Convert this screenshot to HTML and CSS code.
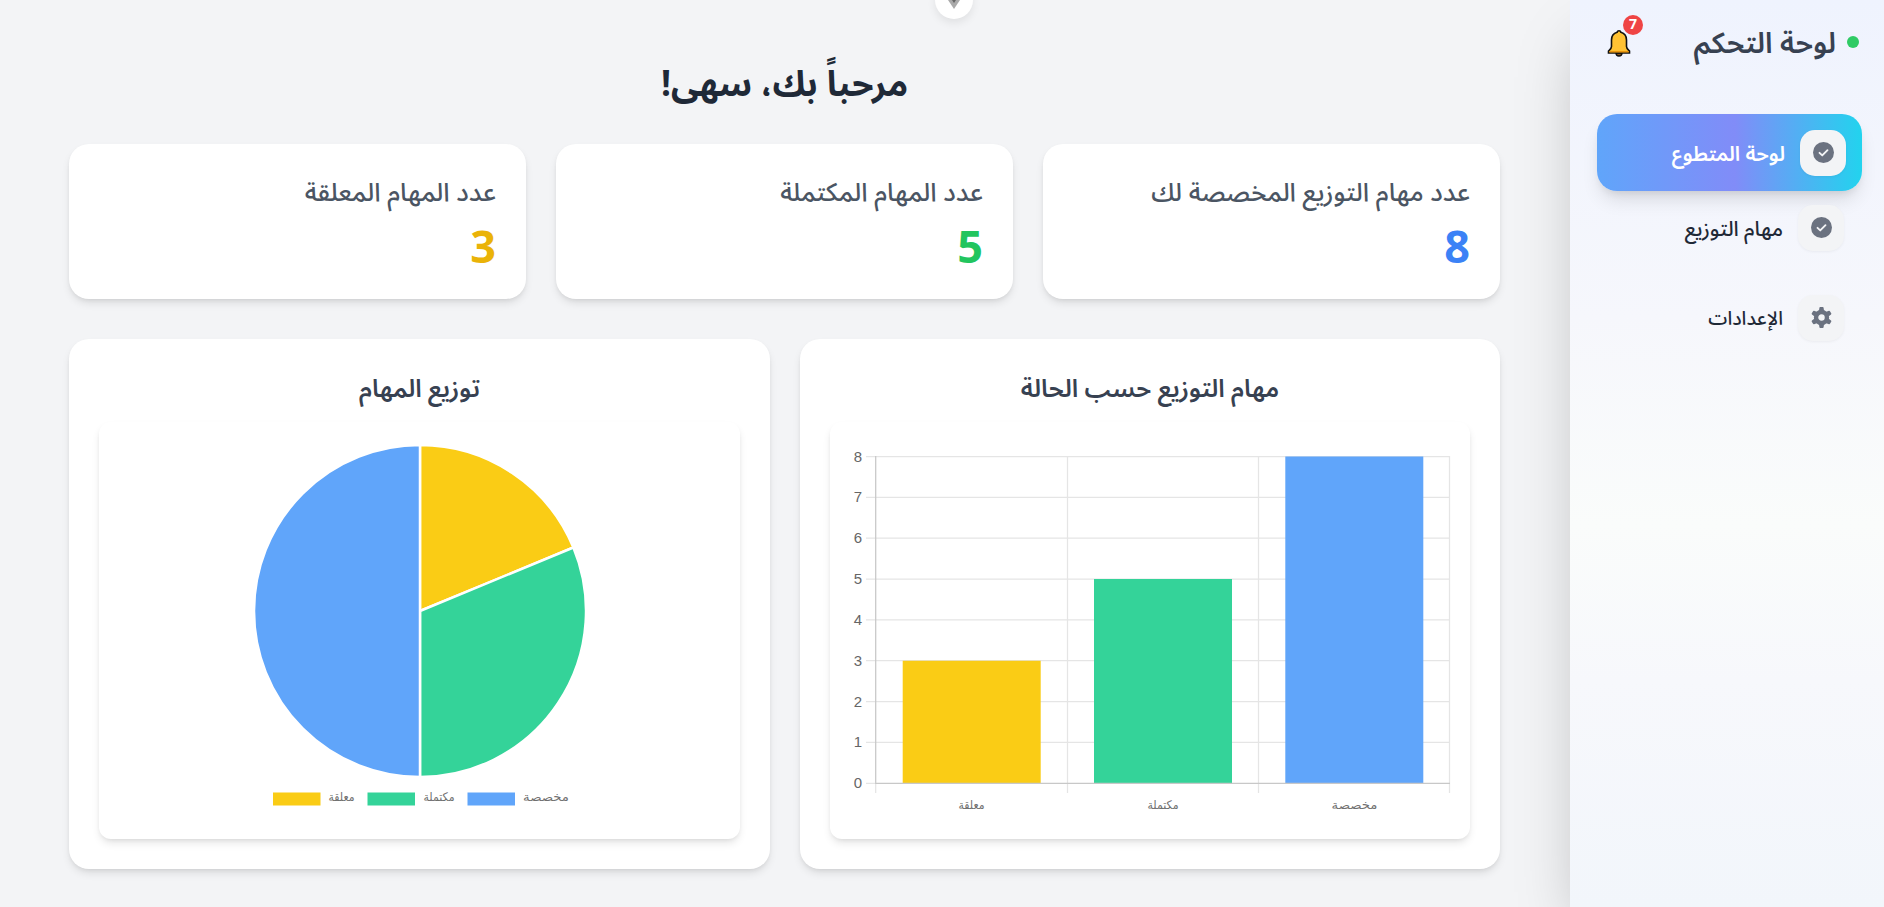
FILE: index.html
```html
<!DOCTYPE html>
<html lang="ar" dir="rtl">
<head>
<meta charset="utf-8">
<title>لوحة التحكم</title>
<link rel="stylesheet" href="styles.css">
</head>
<body>
<aside class="sidebar">
  <header class="brand">
    <span class="status"></span>
    <h2 class="brand-title">لوحة التحكم</h2>
    <div class="bell">
      <svg width="24" height="28" viewBox="0 0 24 28"><path d="M9 24h6a3 3 0 0 1-6 0z" fill="#8a5a1c" stroke="#111" stroke-width="1.4"/><path d="M12 1.800c-1.100 0-1.700.7-1.900 1.500C6.700 4.200 4.500 7 4.500 11v6.500c0 2-1.300 3-3 4.600V24h21v-1.900c-1.700-1.600-3-2.600-3-4.600V11c0-4-2.200-6.800-5.600-7.700-.2-.8-.8-1.500-1.900-1.500z" fill="#ffc233" stroke="#111" stroke-width="1.600"/><path d="M2.300 22.700h19.400" stroke="#e8930c" stroke-width="1.500"/></svg>
      <span class="badge">7</span>
    </div>
  </header>
  <nav class="nav">
    <a class="item active">
      <span class="tile"><svg width="21" height="21" viewBox="0 0 20 20"><circle cx="10" cy="10" r="10" fill="#6b7280"/><path d="M6.200 10.300l2.600 2.500 5-5" fill="none" stroke="#f3f4f6" stroke-width="1.800" stroke-linecap="round" stroke-linejoin="round"/></svg></span>
      <span class="label">لوحة المتطوع</span>
    </a>
    <a class="item">
      <span class="tile"><svg width="21" height="21" viewBox="0 0 20 20"><circle cx="10" cy="10" r="10" fill="#6b7280"/><path d="M6.200 10.300l2.600 2.500 5-5" fill="none" stroke="#f3f4f6" stroke-width="1.800" stroke-linecap="round" stroke-linejoin="round"/></svg></span>
      <span class="label">مهام التوزيع</span>
    </a>
    <a class="item last">
      <span class="tile"><svg width="21" height="21" viewBox="0 0 20 20"><circle cx="10" cy="10" r="5.200" fill="none" stroke="#6b7280" stroke-width="4.200"/><g fill="#6b7280" stroke="#6b7280" stroke-width="1.600" stroke-linejoin="round"><path id="tooth" d="M8.400 3.500L8.800.8h2.400l.4 2.700z"/><use href="#tooth" transform="rotate(60 10 10)"/><use href="#tooth" transform="rotate(120 10 10)"/><use href="#tooth" transform="rotate(180 10 10)"/><use href="#tooth" transform="rotate(240 10 10)"/><use href="#tooth" transform="rotate(300 10 10)"/></g></svg></span>
      <span class="label">الإعدادات</span>
    </a>
  </nav>
</aside>
<main class="main">
  <span class="pull"><svg width="12" height="10" viewBox="0 0 12 10"><path d="M0 0h12L6 9z" fill="#aaa"/><path d="M4 0h4L6 3z" fill="#666"/></svg></span>
  <h1 class="welcome">مرحباً بك، سهى!</h1>
  <section class="stats">
    <div class="card stat"><h3>عدد مهام التوزيع المخصصة لك</h3><p class="blue">8</p></div>
    <div class="card stat"><h3>عدد المهام المكتملة</h3><p class="green">5</p></div>
    <div class="card stat"><h3>عدد المهام المعلقة</h3><p class="amber">3</p></div>
  </section>
  <section class="charts">
    <div class="card chart">
      <h3>مهام التوزيع حسب الحالة</h3>
      <div class="plot">
        <svg width="640" height="417" viewBox="830 422 640 417" direction="ltr">
          <g stroke="#e5e5e5" stroke-width="1.250">
            <path d="M866 456.500H1450M866 497.300H1450M866 538.200H1450M866 579H1450M866 619.900H1450M866 660.700H1450M866 701.600H1450M866 742.400H1450M866 783.300H876"/>
            <path d="M1067.500 456V793M1258.500 456V793M1449.500 456V793M875.700 783V793"/>
          </g>
          <path d="M902.700 660.700h138v122.600h-138z" fill="#facc15"/>
          <path d="M1094 579h138v204.300h-138z" fill="#34d399"/>
          <path d="M1285.300 456.500h138v326.800h-138z" fill="#60a5fa"/>
          <path d="M875.700 456V783.300H1450" fill="none" stroke="#c8c8c8" stroke-width="1.250"/>
          <g class="ticks" text-anchor="end">
            <text x="862" y="461.500">8</text><text x="862" y="502.300">7</text><text x="862" y="543.200">6</text><text x="862" y="584">5</text><text x="862" y="624.900">4</text><text x="862" y="665.700">3</text><text x="862" y="706.600">2</text><text x="862" y="747.400">1</text><text x="862" y="788.300">0</text>
          </g>
          <g class="names" text-anchor="middle" lengthAdjust="spacingAndGlyphs">
            <text x="971.500" y="808.500" textLength="26" lengthAdjust="spacingAndGlyphs">معلقة</text><text x="1163" y="808.500" textLength="31" lengthAdjust="spacingAndGlyphs">مكتملة</text><text x="1354.500" y="808.500" textLength="46" lengthAdjust="spacingAndGlyphs">مخصصة</text>
          </g>
        </svg>
      </div>
    </div>
    <div class="card chart">
      <h3>توزيع المهام</h3>
      <div class="plot">
        <svg width="641" height="417" viewBox="99 422 641 417" direction="ltr">
          <g stroke="#fff" stroke-width="2.500" stroke-linejoin="round">
            <path d="M420 611V445A166 166 0 0 1 573.400 547.500z" fill="#facc15"/>
            <path d="M420 611L573.400 547.500A166 166 0 0 1 420 777z" fill="#34d399"/>
            <path d="M420 611V777A166 166 0 0 1 420 445z" fill="#60a5fa"/>
          </g>
          <path d="M273 792.500h47.500v13H273z" fill="#facc15"/>
          <path d="M367.500 792.500H415v13h-47.500z" fill="#34d399"/>
          <path d="M467.500 792.500H515v13h-47.500z" fill="#60a5fa"/>
          <g class="names" text-anchor="middle">
            <text x="341.500" y="801" textLength="26" lengthAdjust="spacingAndGlyphs">معلقة</text><text x="439" y="801" textLength="31" lengthAdjust="spacingAndGlyphs">مكتملة</text><text x="546" y="801" textLength="46" lengthAdjust="spacingAndGlyphs">مخصصة</text>
          </g>
        </svg>
      </div>
    </div>
  </section>
</main>
</body>
</html>
```
FILE: styles.css
```css
* { box-sizing: border-box; }
body {
  margin: 0;
  height: 907px;
  display: flex;
  overflow: hidden;
  background: #f3f4f6;
  font-family: "Noto Sans Arabic", "Open Sans", "DejaVu Sans", sans-serif;
  color: #1f2937;
}
h1, h2, h3, p { margin: 0; }
svg { display: block; }

.sidebar {
  position: relative;
  z-index: 1;
  width: 314px;
  height: 907px;
  flex: none;
  background: linear-gradient(180deg, #eff3fe 0%, #f6f7fc 35%, #fafcfb 58%, #f7f8fc 75%, #f2f6fb 100%);
  box-shadow: 0 31px 62px -15px rgba(0, 0, 0, .27);
}
.brand {
  display: flex;
  align-items: center;
  height: 84px;
  padding: 0 25px 0 27px;
}
.status { width: 12px; height: 12px; border-radius: 50%; background: #2fcb65; }
.brand-title {
  margin-right: 11px;
  padding-top: 4px;
  font-size: 29px;
  font-weight: 600;
  line-height: 40px;
  color: #374151;
  white-space: nowrap;
}
.bell { position: relative; margin-right: auto; margin-left: 10px; padding-top: 2px; }
.badge {
  position: absolute;
  left: 16px;
  top: -12px;
  width: 20px;
  height: 20px;
  border-radius: 50%;
  background: #ef4444;
  color: #fff;
  font-size: 14px;
  font-weight: 700;
  line-height: 20px;
  text-align: center;
}
.nav { padding: 30px 22px 0 27px; }
.item {
  display: flex;
  align-items: center;
  gap: 15px;
  height: 77px;
  padding: 0 16px;
  border-radius: 20px;
  font-size: 20.8px;
  font-weight: 500;
}
.item:not(.active) { padding-right: 18px; height: 75px; margin-top: -1px; }
.item.last { margin-top: 15px; font-size: 19.2px; }
.item.active {
  background: linear-gradient(90deg, #60a5fa, #818cf8 52%, #22d3ee);
  color: #fff;
  font-size: 20.5px;
  font-weight: 600;
  box-shadow: 0 12px 19px -4px rgba(0, 0, 0, .12), 0 5px 8px -4px rgba(0, 0, 0, .1);
}
.tile {
  display: flex;
  align-items: center;
  justify-content: center;
  width: 46px;
  height: 46px;
  border-radius: 15px;
  background: #f3f4f6;
  box-shadow: 0 1px 3px rgba(0, 0, 0, .05);
}
.label { padding-top: 3px; white-space: nowrap; }

.main { position: relative; width: 1570px; padding: 57px 70px 0 69px; }
.pull {
  position: absolute;
  left: 935px;
  top: -19px;
  width: 38px;
  height: 38px;
  border-radius: 50%;
  background: #fff;
  box-shadow: 0 4px 8px rgba(0, 0, 0, .08);
}
.pull svg { margin: 19px 13px 0 0; }
.welcome { height: 87px; font-size: 35px; font-weight: 700; line-height: 57px; text-align: center; }
.card {
  background: #fff;
  border-radius: 20px;
  box-shadow: 0 5px 8px -1px rgba(0, 0, 0, .1), 0 2px 5px -2px rgba(0, 0, 0, .1);
}
.stats { display: grid; grid-template-columns: repeat(3, 1fr); gap: 30px; }
.stat { height: 155px; padding: 32px 30px 0; }
.stat h3 { height: 35px; font-size: 25.6px; font-weight: 500; line-height: 35px; color: #4b5563; }
.stat p { margin-top: 13px; font-size: 45px; font-weight: 700; line-height: 50px; }
.blue { color: #3b82f6; }
.green { color: #22c55e; }
.amber { color: #eab308; }
.charts { display: grid; grid-template-columns: 1fr 1fr; gap: 30px; margin-top: 40px; }
.chart { height: 530px; padding: 30px; }
.chart h3 { height: 53px; padding-top: 1px; font-size: 24.8px; font-weight: 600; line-height: 38px; color: #374151; text-align: center; }
.plot {
  height: 417px;
  border-radius: 12px;
  box-shadow: 0 5px 8px -1px rgba(0, 0, 0, .1), 0 2px 5px -2px rgba(0, 0, 0, .1);
}
.ticks { font: 15px "Liberation Sans", sans-serif; fill: #666; }
.names { font: 12px "DejaVu Sans", sans-serif; fill: #707070; }
```
